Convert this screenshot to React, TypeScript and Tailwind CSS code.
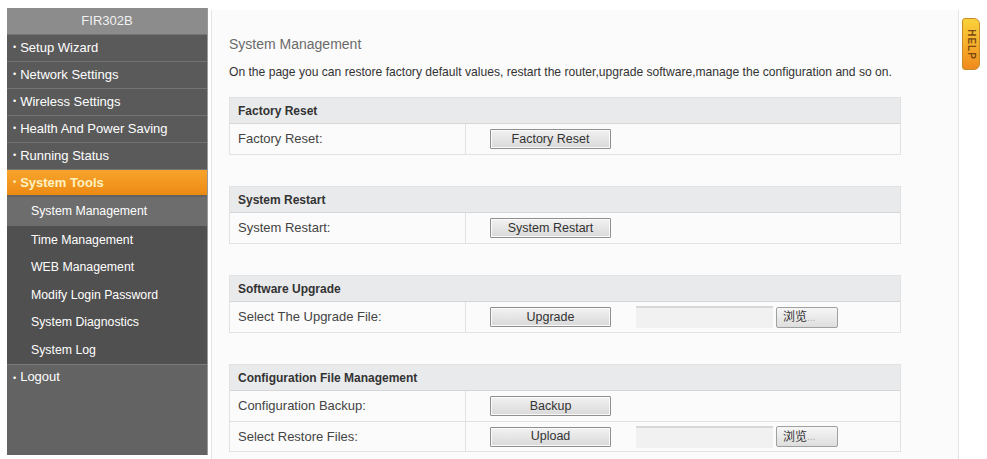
import React from "react";

const font = { fontFamily: '"Liberation Sans", Arial, "Noto Sans CJK SC", sans-serif' };

function Btn({ label, w = "w-[121px]" }: { label: string; w?: string }) {
  return (
    <div
      className={`${w} h-[20px] border border-[#8f8f8f] bg-gradient-to-b from-[#f2f2f2] to-[#d9d9d9] flex items-center justify-center text-[12.5px] text-[#333] rounded-[1px] shadow-[inset_0_0_0_1px_#fafafa]`}
    >
      {label}
    </div>
  );
}

function FileInput() {
  return (
    <div className="flex items-center gap-[3px] ml-[25px]">
      <div className="w-[137px] h-[22px] bg-[#f1f1f1] border-t-2 border-[#d8d8d8]" />
      <div className="w-[62px] h-[21px] border border-[#a0a0a0] bg-gradient-to-b from-[#f6f6f6] to-[#dedede] flex items-center pl-[6px] text-[12px] text-[#333] rounded-[2px]">
        浏览<span className="text-[#aaa] text-[10px]">...</span>
      </div>
    </div>
  );
}

function Section({
  title,
  rows,
}: {
  title: string;
  rows: { label: string; btn: string; file?: boolean }[];
}) {
  return (
    <div className="border border-[#e2e2e2] w-[672px]">
      <div className="h-[26px] bg-[#e9eaec] flex items-center pl-[8px] text-[12px] font-bold text-[#333] border-b border-[#d6d6d6]">
        {title}
      </div>
      {rows.map((r, i) => (
        <div
          key={i}
          className={`h-[30px] flex items-center bg-[#fbfbfb] ${i > 0 ? "border-t border-[#e0e0e0]" : ""}`}
        >
          <div className="w-[236px] h-full flex items-center pl-[8px] text-[13px] text-[#444] border-r border-[#e2e2e2]">
            {r.label}
          </div>
          <div className="pl-[24px] flex items-center">
            <Btn label={r.btn} />
            {r.file && <FileInput />}
          </div>
        </div>
      ))}
    </div>
  );
}

const topItems = ["Setup Wizard", "Network Settings", "Wireless Settings", "Health And Power Saving", "Running Status"];
const subItems = ["Time Management", "WEB Management", "Modify Login Password", "System Diagnostics", "System Log"];

export default function App() {
  return (
    <div className="w-[987px] h-[459px] bg-white flex overflow-hidden" style={font}>
      {/* Sidebar */}
      <div className="ml-[7px] mt-[8px] w-[201px] h-[447px] flex flex-col bg-[#626262] border-r border-[#9a9a9a]">
        <div className="h-[26px] bg-[#8c8c8c] flex items-center justify-center text-[13px] text-[#f0f0f0]">
          FIR302B
        </div>
        {topItems.map((t) => (
          <div
            key={t}
            className="h-[27px] flex items-center pl-[6px] text-[13px] text-white bg-[#5a5a5a] border-t border-[#747474]"
          >
            <span className="mr-[4px] text-[9px]">•</span>
            {t}
          </div>
        ))}
        <div className="h-[26px] flex items-center pl-[6px] text-[13px] font-bold text-[#fff3c0] bg-gradient-to-b from-[#f8a42c] to-[#ec8a12] border-t border-[#747474]">
          <span className="mr-[4px] text-[9px]">•</span>
          System Tools
        </div>
        <div className="h-[29px] mt-[2px] flex items-center pl-[24px] text-[12.3px] text-white bg-[#6d6d6d]">
          System Management
        </div>
        {subItems.map((t) => (
          <div key={t} className="h-[27.5px] flex items-center pl-[24px] text-[12.3px] text-white bg-[#505050]">
            {t}
          </div>
        ))}
        <div className="flex-1 bg-[#636363] border-t border-[#7c7c7c] pt-[2px] pl-[6px] text-[13px] text-white">
          <span className="mr-[4px] text-[9px]">•</span>
          Logout
        </div>
      </div>

      {/* Content */}
      <div className="ml-[3px] mt-[10px] w-[748px] h-[449px] bg-[#fbfbfb] border-l border-[#d0d0d0] border-r border-[#e4e4e4] pl-[17px] pt-[26px] flex flex-col">
        <div className="text-[14px] text-[#6a6a6a] leading-[17px]">System Management</div>
        <div className="text-[12.1px] text-[#333] mt-[12px] leading-[15px]">
          On the page you can restore factory default values, restart the router,upgrade software,manage the configuration and so on.
        </div>
        <div className="mt-[17px] flex flex-col gap-[31px]">
          <Section title="Factory Reset" rows={[{ label: "Factory Reset:", btn: "Factory Reset" }]} />
          <Section title="System Restart" rows={[{ label: "System Restart:", btn: "System Restart" }]} />
          <Section title="Software Upgrade" rows={[{ label: "Select The Upgrade File:", btn: "Upgrade", file: true }]} />
          <Section
            title="Configuration File Management"
            rows={[
              { label: "Configuration Backup:", btn: "Backup" },
              { label: "Select Restore Files:", btn: "Upload", file: true },
            ]}
          />
        </div>
      </div>

      {/* Help tab */}
      <div className="mt-[18px] ml-[3px] w-[18px] h-[52px] rounded-r-[6px] rounded-l-[3px] bg-gradient-to-b from-[#f9d23a] to-[#f08a1c] border border-[#c98a2a] flex items-center justify-center">
        <span className="text-[10px] font-bold text-[#7a4a10] rotate-90 tracking-[1px]">HELP</span>
      </div>
    </div>
  );
}
